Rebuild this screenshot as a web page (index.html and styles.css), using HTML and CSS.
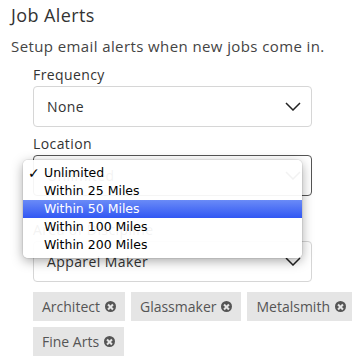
FILE: index.html
```html
<!DOCTYPE html>
<html lang="en">
<head>
    <meta charset="UTF-8">
    <meta name="viewport" content="width=device-width, initial-scale=1.0">
    <title>Job Alerts</title>
    <link rel="stylesheet" href="styles.css">
</head>
<body>
    <div class="alerts">
        <h2 class="title">Job Alerts</h2>
        <p class="intro">Setup email alerts when new jobs come in.</p>

        <div class="fields">
            <div class="field">
                <label>Frequency</label>
                <div class="select">
                    <span>None</span>
                    <svg class="chevron" width="16" height="9" viewBox="0 0 16 9"><path d="M1 1l7 7 7-7" fill="none" stroke="#222" stroke-width="1.5"/></svg>
                </div>
            </div>

            <div class="field location">
                <label>Location</label>
                <div class="select focused">
                    <span>Unlimited</span>
                    <svg class="chevron" width="16" height="9" viewBox="0 0 16 9"><path d="M1 1l7 7 7-7" fill="none" stroke="#222" stroke-width="1.5"/></svg>
                </div>

                <!-- native popup menu, open -->
                <ul class="menu">
                    <li class="checked">Unlimited</li>
                    <li>Within 25 Miles</li>
                    <li class="hover">Within 50 Miles</li>
                    <li>Within 100 Miles</li>
                    <li>Within 200 Miles</li>
                </ul>
            </div>

            <div class="field discipline">
                <label>Area of Discipline</label>
                <div class="select">
                    <span>Apparel Maker</span>
                    <svg class="chevron" width="16" height="9" viewBox="0 0 16 9"><path d="M1 1l7 7 7-7" fill="none" stroke="#222" stroke-width="1.5"/></svg>
                </div>
            </div>

            <div class="tags">
                <span class="tag">Architect <i class="remove"></i></span>
                <span class="tag">Glassmaker <i class="remove"></i></span>
                <span class="tag">Metalsmith <i class="remove"></i></span>
                <span class="tag">Fine Arts <i class="remove"></i></span>
            </div>
        </div>
    </div>
</body>
</html>
```

FILE: styles.css
```css
body {
    margin: 0;
    background: #fff;
    font-family: "Open Sans", Arial, sans-serif;
    letter-spacing: 0.4px;
    color: #333;
}
.alerts {
    padding: 3px 0 0 11px;
}
.title {
    margin: 0;
    font-size: 18px;
    font-weight: 400;
    line-height: 24px;
    color: #333;
}
.intro {
    margin: 8px 0 0;
    font-size: 15px;
    line-height: 22px;
    color: #444;
}
.fields {
    padding-left: 22px;
    margin-top: 9px;
}
.field {
    position: relative;
    margin-bottom: 8px;
}
.field label {
    display: block;
    font-size: 14px;
    line-height: 18px;
    margin-bottom: 2px;
    color: #333;
}
.select {
    width: 279px;
    height: 41px;
    box-sizing: border-box;
    border: 1px solid #d6d6d6;
    border-radius: 4px;
    display: flex;
    align-items: center;
    justify-content: space-between;
    padding: 0 10px 0 13px;
    font-size: 14px;
    color: #333;
}
.select.focused {
    border-color: #555;
}
.chevron {
    display: block;
}
.discipline {
    margin-top: 25px;
}
.menu {
    position: absolute;
    left: -10px;
    top: 25px;
    width: 279px;
    margin: 0;
    padding: 4px 0;
    list-style: none;
    background: rgba(255, 255, 255, 0.94);
    border-radius: 5px;
    box-shadow: 0 3px 12px rgba(0, 0, 0, 0.35), 0 0 0 1px rgba(0, 0, 0, 0.06);
    font-family: "DejaVu Sans", sans-serif;
    font-size: 12.5px;
    letter-spacing: 0;
    color: #000;
    z-index: 10;
}
.menu li {
    height: 18px;
    line-height: 18px;
    padding-left: 21px;
    position: relative;
}
.menu li.checked::before {
    content: "✓";
    position: absolute;
    left: 5px;
    font-size: 14px;
    font-weight: bold;
}
.menu li.hover {
    background: linear-gradient(#6a8bf7, #3157f3);
    color: #fff;
}
.tags {
    display: flex;
    flex-wrap: wrap;
    gap: 6px;
    margin-top: 10px;
    margin-right: -4px;
}
.tag {
    display: inline-flex;
    align-items: center;
    gap: 5px;
    height: 29px;
    padding: 0 9px;
    background: #e5e5e5;
    font-size: 14px;
    letter-spacing: 0;
    color: #555;
}
.remove {
    width: 11px;
    height: 11px;
    border-radius: 50%;
    background: #555;
    position: relative;
}
.remove::before, .remove::after {
    content: "";
    position: absolute;
    left: 2px;
    top: 4.5px;
    width: 7px;
    height: 2px;
    background: #e5e5e5;
    transform: rotate(45deg);
}
.remove::after {
    transform: rotate(-45deg);
}
```
